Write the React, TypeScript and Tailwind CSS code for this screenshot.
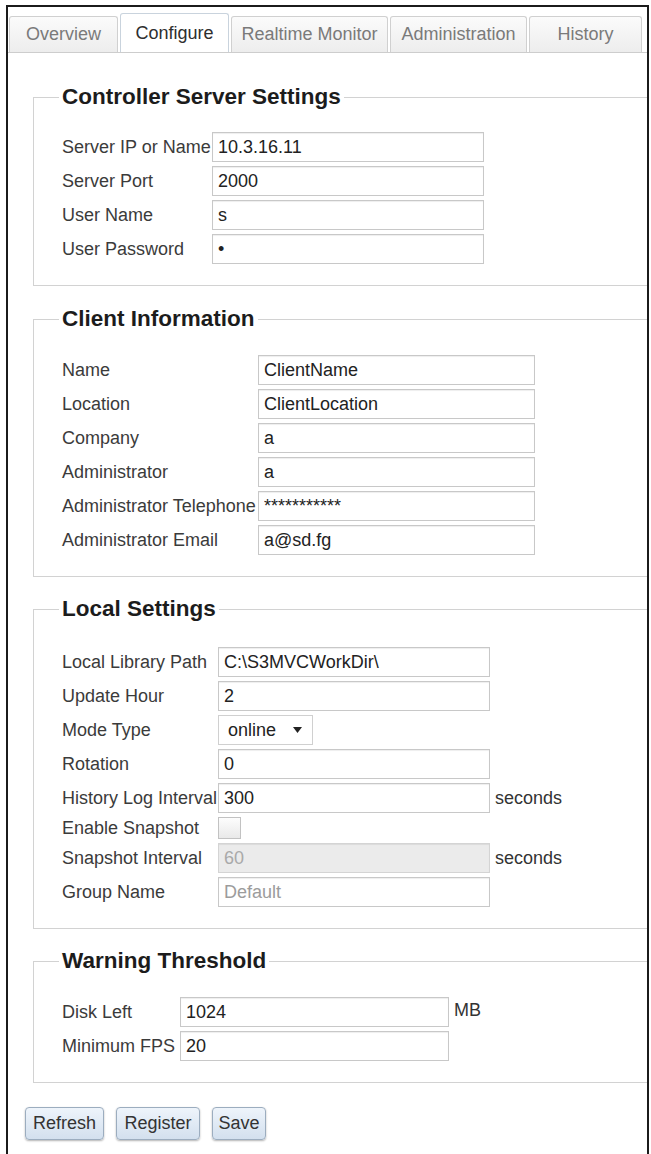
import React from "react";

const tabs = [
  { name: "Overview", w: "w-[109px]" },
  { name: "Configure", w: "w-[109px]", active: true },
  { name: "Realtime Monitor", w: "w-[157px]" },
  { name: "Administration", w: "w-[137px]" },
  { name: "History", w: "w-[113px]" },
];

function Section({
  title,
  className,
  children,
}: {
  title: string;
  className: string;
  children: React.ReactNode;
}) {
  return (
    <fieldset className={`ml-[25px] mr-[-20px] border border-[#d2d2d2] pl-[28px] pb-[21px] ${className}`}>
      <legend className="ml-[-3px] px-[3px] text-[22.5px] font-bold leading-[26px] text-[#1c1c1c]">
        {title}
      </legend>
      <div className="flex flex-col gap-[4px]">{children}</div>
    </fieldset>
  );
}

function Row({
  label,
  labelW,
  children,
  tall = true,
}: {
  label: string;
  labelW: string;
  children: React.ReactNode;
  tall?: boolean;
}) {
  return (
    <div className={`flex items-center ${tall ? "h-[30px]" : "h-[22px]"}`}>
      <span className={`${labelW} shrink-0 whitespace-nowrap text-[18px] text-[#3b3b3b]`}>{label}</span>
      {children}
    </div>
  );
}

function Field({
  value,
  w,
  type = "text",
  tone = "text-[#222]",
  disabled,
}: {
  value: string;
  w: string;
  type?: string;
  tone?: string;
  disabled?: boolean;
}) {
  return (
    <input
      type={type}
      readOnly
      defaultValue={value}
      className={`${w} h-[30px] border px-[5px] text-[18px] outline-none shadow-[inset_0_1px_1px_rgba(0,0,0,0.07)] ${tone} ${
        disabled ? "border-[#d4d4d4] bg-[#ebebeb]" : "border-[#c8c8c8] bg-white"
      }`}
    />
  );
}

export default function App() {
  return (
    <div className="h-[1154px] w-[651px] bg-white pl-[6px] pt-[5px] font-['Liberation_Sans',Arial,sans-serif]">
      <div className="h-[1149px] w-[643px] overflow-hidden border-2 border-b-0 border-[#1b1b1b]">
        {/* tabs */}
        <div className="flex h-[46px] items-end gap-[2px] border-b border-[#cdcdcd] pl-[1px]">
          {tabs.map((t) =>
            t.active ? (
              <div
                key={t.name}
                className={`${t.w} flex h-[39px] items-center justify-center rounded-t-[3px] border border-b-0 border-[#c9d3dd] bg-white text-[18px] text-[#2e2e2e]`}
              >
                {t.name}
              </div>
            ) : (
              <div
                key={t.name}
                className={`${t.w} flex h-[36px] items-center justify-center rounded-t-[3px] border border-b-0 border-[#d0d0d0] bg-linear-to-b from-[#fbfbfb] to-[#ededed] text-[18px] text-[#7a7a7a]`}
              >
                {t.name}
              </div>
            )
          )}
        </div>

        <Section title="Controller Server Settings" className="mt-[31px] pt-[22px]">
          <Row label="Server IP or Name" labelW="w-[150px]">
            <Field value="10.3.16.11" w="w-[272px]" />
          </Row>
          <Row label="Server Port" labelW="w-[150px]">
            <Field value="2000" w="w-[272px]" />
          </Row>
          <Row label="User Name" labelW="w-[150px]">
            <Field value="s" w="w-[272px]" />
          </Row>
          <Row label="User Password" labelW="w-[150px]">
            <Field value="a" type="password" w="w-[272px]" />
          </Row>
        </Section>

        <Section title="Client Information" className="mt-[20px] pt-[23px]">
          <Row label="Name" labelW="w-[196px]">
            <Field value="ClientName" w="w-[277px]" />
          </Row>
          <Row label="Location" labelW="w-[196px]">
            <Field value="ClientLocation" w="w-[277px]" />
          </Row>
          <Row label="Company" labelW="w-[196px]">
            <Field value="a" w="w-[277px]" />
          </Row>
          <Row label="Administrator" labelW="w-[196px]">
            <Field value="a" w="w-[277px]" />
          </Row>
          <Row label="Administrator Telephone" labelW="w-[196px]">
            <Field value="***********" w="w-[277px]" />
          </Row>
          <Row label="Administrator Email" labelW="w-[196px]">
            <Field value="a@sd.fg" w="w-[277px]" />
          </Row>
        </Section>

        <Section title="Local Settings" className="mt-[19px] pt-[25px]">
          <Row label="Local Library Path" labelW="w-[156px]">
            <Field value="C:\S3MVCWorkDir\" w="w-[272px]" />
          </Row>
          <Row label="Update Hour" labelW="w-[156px]">
            <Field value="2" w="w-[272px]" />
          </Row>
          <Row label="Mode Type" labelW="w-[156px]">
            <div className="flex h-[30px] w-[95px] items-center justify-between border border-[#d0d0d0] bg-white pl-[9px] pr-[10px] text-[18px] text-[#222]">
              <span>online</span>
              <svg width="9" height="6" viewBox="0 0 9 6">
                <path d="M0 0h9L4.5 6z" fill="#222" />
              </svg>
            </div>
          </Row>
          <Row label="Rotation" labelW="w-[156px]">
            <Field value="0" w="w-[272px]" />
          </Row>
          <Row label="History Log Interval" labelW="w-[156px]">
            <Field value="300" w="w-[272px]" />
            <span className="ml-[5px] text-[18px] text-[#333]">seconds</span>
          </Row>
          <Row label="Enable Snapshot" labelW="w-[156px]" tall={false}>
            <div className="h-[22px] w-[23px] border border-[#c2c2c2] bg-linear-to-b from-[#fdfdfd] to-[#e9e9e9]" />
          </Row>
          <Row label="Snapshot Interval" labelW="w-[156px]">
            <Field value="60" w="w-[272px]" tone="text-[#a9a9a9]" disabled />
            <span className="ml-[5px] text-[18px] text-[#333]">seconds</span>
          </Row>
          <Row label="Group Name" labelW="w-[156px]">
            <Field value="Default" w="w-[272px]" tone="text-[#9c9c9c]" />
          </Row>
        </Section>

        <Section title="Warning Threshold" className="mt-[19px] pt-[23px]">
          <Row label="Disk Left" labelW="w-[118px]">
            <Field value="1024" w="w-[269px]" />
            <span className="ml-[5px] mb-[4px] text-[18px] text-[#333]">MB</span>
          </Row>
          <Row label="Minimum FPS" labelW="w-[118px]">
            <Field value="20" w="w-[269px]" />
          </Row>
        </Section>

        <div className="ml-[17px] mt-[24px] flex gap-[12px]">
          {[
            { t: "Refresh", w: "w-[79px]" },
            { t: "Register", w: "w-[84px]" },
            { t: "Save", w: "w-[54px]" },
          ].map((b) => (
            <button
              key={b.t}
              className={`${b.w} h-[33px] rounded-[4px] border border-[#9cadbf] bg-linear-to-b from-[#eef4fb] to-[#d3e0ee] text-[18px] text-[#333] shadow-[0_1px_2px_rgba(0,0,0,0.3)]`}
            >
              {b.t}
            </button>
          ))}
        </div>
      </div>
    </div>
  );
}
